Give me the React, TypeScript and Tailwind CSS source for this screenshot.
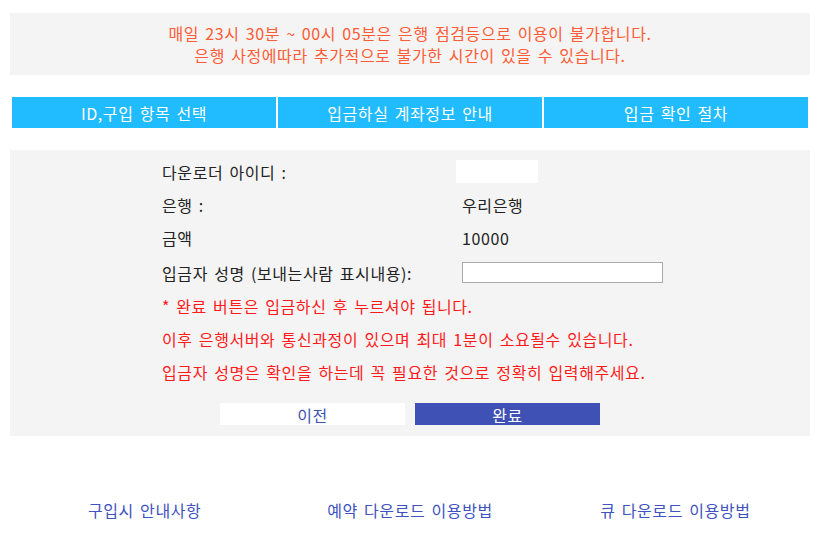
import React from 'react'

// ── Data ─────────────────────────────────────────────────────────────────────

const TABS = ['ID,구입 항목 선택', '입금하실 계좌정보 안내', '입금 확인 절차']

const NOTES = [
  '* 완료 버튼은 입금하신 후 누르셔야 됩니다.',
  '이후 은행서버와 통신과정이 있으며 최대 1분이 소요될수 있습니다.',
  '입금자 성명은 확인을 하는데 꼭 필요한 것으로 정확히 입력해주세요.',
]

const LINKS = ['구입시 안내사항', '예약 다운로드 이용방법', '큐 다운로드 이용방법']

const FONT = "font-['Malgun_Gothic','Noto_Sans_CJK_KR',sans-serif]"

// ── Main Component ───────────────────────────────────────────────────────────

export default function App() {
  return (
    <div className={`${FONT} w-[820px] bg-white pt-[13px] pb-[20px] text-[16px] tracking-[0.6px] [word-spacing:2px]`}>
      {/* Maintenance notice */}
      <div className="mx-[10px] bg-[#f4f4f4] py-[9px] text-center leading-[22px] text-[#ff5b35]">
        <p>매일 23시 30분 ~ 00시 05분은 은행 점검등으로 이용이 불가합니다.</p>
        <p>은행 사정에따라 추가적으로 불가한 시간이 있을 수 있습니다.</p>
      </div>

      {/* Steps */}
      <div className="mx-[12px] mt-[22px] grid grid-cols-3 gap-[2px]">
        {TABS.map(t => (
          <div
            key={t}
            className="flex h-[31px] items-center justify-center bg-[#21bbff] text-white"
          >
            {t}
          </div>
        ))}
      </div>

      {/* Form */}
      <div className="mx-[10px] mt-[22px] bg-[#f4f4f4] pt-[5px] pb-[11px]">
        <div className="ml-[152px] grid grid-cols-[294px_1fr] text-[#222]">
          <Row label="다운로더 아이디 :">
            <div className="h-[23px] w-[82px] bg-white" />
          </Row>
          <Row label="은행 :">
            <span className="ml-[6px]">우리은행</span>
          </Row>
          <Row label="금액">
            <span className="ml-[6px]">10000</span>
          </Row>
          <Row label="입금자 성명 (보내는사람 표시내용):" tall>
            <input
              type="text"
              className="ml-[6px] h-[21px] w-[201px] border border-[#aaa] bg-white outline-none"
            />
          </Row>
        </div>

        <div className="ml-[152px] text-[#ff1a1a]">
          {NOTES.map(n => (
            <p key={n} className="flex h-[33px] items-center">{n}</p>
          ))}
        </div>

        <div className="mt-[15px] flex justify-center gap-[10px]">
          <button className="h-[22px] w-[185px] bg-white text-[#4052b5]">이전</button>
          <button className="h-[22px] w-[185px] bg-[#3f51b5] text-white">완료</button>
        </div>
      </div>

      {/* Footer links */}
      <div className="mx-[12px] mt-[63px] grid grid-cols-3 text-center text-[#4052c0]">
        {LINKS.map(l => (
          <a key={l} href="#" className="leading-[22px]">{l}</a>
        ))}
      </div>
    </div>
  )
}

// ── Row ──────────────────────────────────────────────────────────────────────

function Row({ label, tall, children }: { label: string; tall?: boolean; children: React.ReactNode }) {
  const h = tall ? 'h-[33px] mt-[2px]' : 'h-[33px]'
  return (
    <>
      <div className={`flex items-center ${h}`}>{label}</div>
      <div className={`flex items-center ${h}`}>{children}</div>
    </>
  )
}
